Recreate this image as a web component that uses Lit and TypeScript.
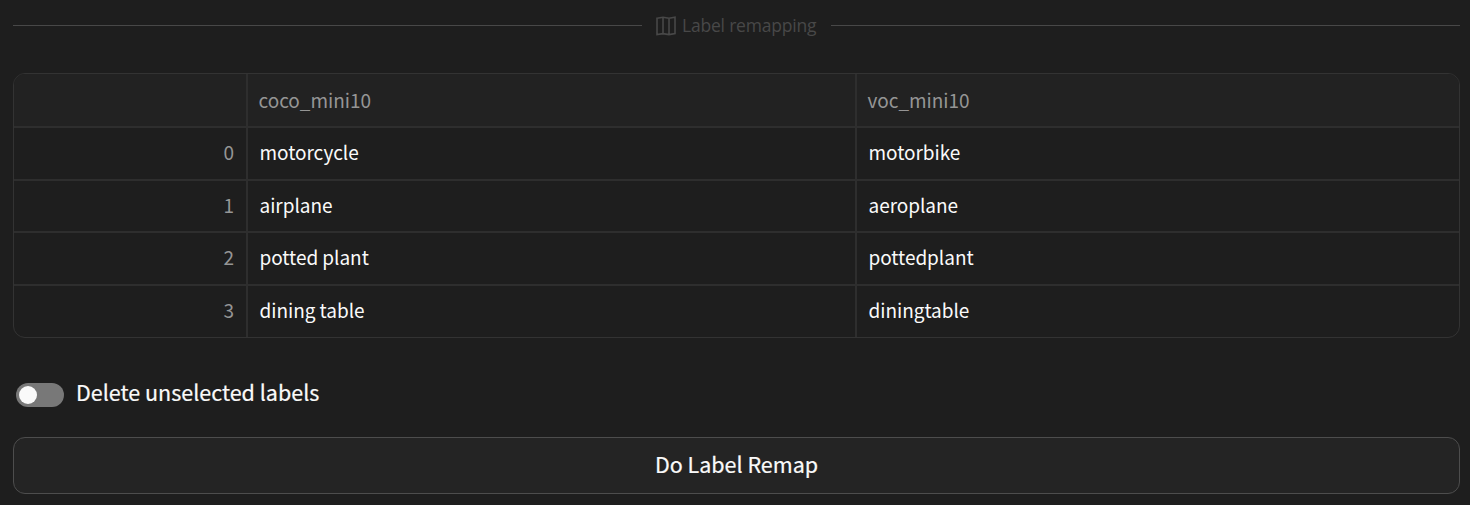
import { LitElement, html, css } from "lit";
import { customElement, state } from "lit/decorators.js";

@customElement("app-root")
class AppRoot extends LitElement {
  static styles = css`
    :host {
      display: flex;
      flex-direction: column;
      box-sizing: border-box;
      height: 505px;
      padding: 0 10px 0 13px;
      background: #1e1e1e;
      color: #fafafa;
      font-family: "Noto Sans CJK SC", sans-serif;
      overflow: hidden;
    }
    .divider {
      display: flex;
      align-items: center;
      height: 51px;
      color: #484848;
      font: 17.5px/24px "Open Sans", sans-serif;
    }
    .rule { flex: 1; height: 1px; background: #484848; }
    .title { display: flex; align-items: center; width: 189px; box-sizing: border-box; padding-left: 14px; }
    .title svg { width: 20px; height: 20px; margin-right: 6px; }
    .title span { white-space: nowrap; letter-spacing: -0.2px; padding-bottom: 1px; }
    .grid {
      display: grid;
      grid-template-columns: 234px 609px 1fr;
      grid-template-rows: 54px 53px 52px 53px 1fr;
      box-sizing: border-box;
      height: 265px;
      margin-top: 22px;
      border: 1px solid #333;
      border-radius: 12px;
      overflow: hidden;
      font-size: 19px;
    }
    .cell {
      display: flex;
      align-items: center;
      box-sizing: border-box;
      padding: 0 12px 4px 11.5px;
      border-right: 2px solid #2e2e2e;
      border-bottom: 2px solid #2e2e2e;
      white-space: nowrap;
    }
    .cell span { letter-spacing: -0.04px; }
    .cell:nth-child(3n) { border-right: 0; }
    .cell:nth-last-child(-n + 3) { border-bottom: 0; padding-bottom: 4px; }
    .head { background: #222; color: #959595; padding: 0 11px 2px 10.5px; }
    .index { justify-content: flex-end; color: #959595; padding-right: 12px; }
    .option {
      display: flex;
      align-items: center;
      height: 36px;
      margin-top: 38px;
      padding-left: 3px;
      font-size: 21.5px;
      cursor: pointer;
    }
    .option span { padding-bottom: 5px; -webkit-text-stroke: 0.2px; }
    .track {
      box-sizing: border-box;
      width: 48px;
      height: 24px;
      margin: 2px 12px 0 0;
      padding: 3px;
      border-radius: 12px;
      background: #787878;
    }
    .thumb { width: 18px; height: 18px; border-radius: 50%; background: #fafafa; }
    .on .thumb { margin-left: auto; }
    .action {
      box-sizing: border-box;
      height: 57px;
      margin-top: 25px;
      padding: 0 0 5px;
      border: 1px solid #4d4d4d;
      border-radius: 12px;
      background: #242424;
      color: #fafafa;
      font: 21.5px "Noto Sans CJK SC", sans-serif;
      -webkit-text-stroke: 0.2px;
    }
  `;

  @state() private removeUnselected = false;

  private rows = [
    ["motorcycle", "motorbike"],
    ["airplane", "aeroplane"],
    ["potted plant", "pottedplant"],
    ["dining table", "diningtable"],
  ];

  render() {
    return html`
      <div class="divider">
        <div class="rule"></div>
        <div class="title">
          <svg viewBox="0 0 20 20" fill="none" stroke="currentColor" stroke-width="1.6">
            <path d="M1 2.2L7 1.2L13 2.2L19 1.2V17.6L13 18.6L7 17.6L1 18.6ZM7 1.2V17.6M13 2.2V18.6" />
          </svg>
          <span>Label remapping</span>
        </div>
        <div class="rule"></div>
      </div>
      <div class="grid">
        <div class="cell head"></div>
        <div class="cell head"><span>coco_mini10</span></div>
        <div class="cell head"><span>voc_mini10</span></div>
        ${this.rows.map(
          ([from, to], i) => html`
            <div class="cell index"><span>${i}</span></div>
            <div class="cell"><span>${from}</span></div>
            <div class="cell"><span>${to}</span></div>
          `
        )}
      </div>
      <div
        class="option ${this.removeUnselected ? "on" : ""}"
        @click=${() => (this.removeUnselected = !this.removeUnselected)}
      >
        <div class="track"><div class="thumb"></div></div>
        <span>Delete unselected labels</span>
      </div>
      <button class="action">Do Label Remap</button>
    `;
  }
}
